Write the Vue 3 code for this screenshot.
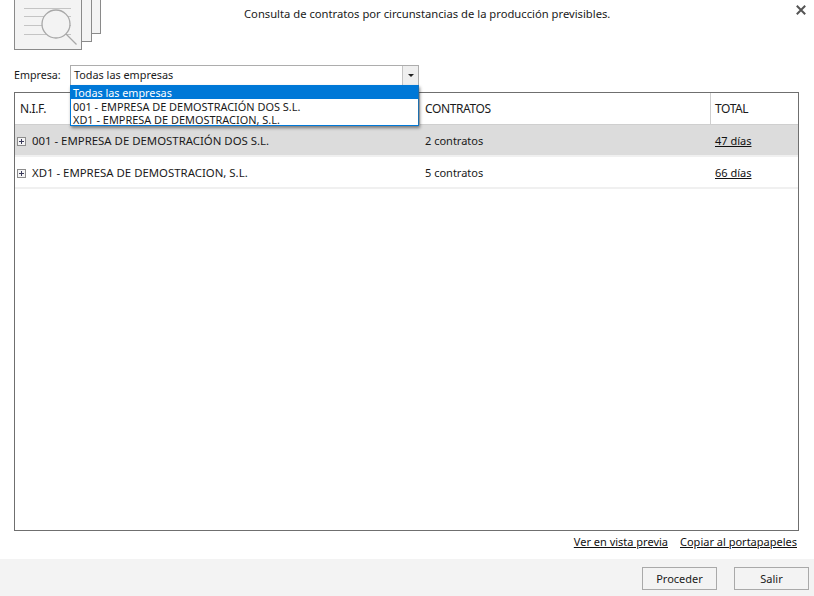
<script setup>
const rows = [
  { name: '001 - EMPRESA DE DEMOSTRACIÓN DOS S.L.', contracts: '2 contratos', total: '47 días', active: true },
  { name: 'XD1 - EMPRESA DE DEMOSTRACION, S.L.', contracts: '5 contratos', total: '66 días', active: false },
]
const options = ['Todas las empresas', '001 - EMPRESA DE DEMOSTRACIÓN DOS S.L.', 'XD1 - EMPRESA DE DEMOSTRACION, S.L.']
</script>

<template>
  <div class="page">
    <header class="head">
      <svg class="logo" width="90" height="50" viewBox="0 0 90 50">
        <rect x="0.5" y="-10" width="86" height="43.5" fill="#f3f3f3" stroke="#8a8a8a" />
        <rect x="0.5" y="-10" width="77" height="51.5" fill="#f3f3f3" stroke="#8a8a8a" />
        <rect x="0.5" y="-10" width="67" height="59.5" fill="#f3f3f3" stroke="#8a8a8a" />
        <path d="M10 8.5H57M10 16.5H57M10 25.5H57M10 34.5H57" stroke="#c4c4c4" fill="none" />
        <circle cx="42" cy="24" r="14" fill="#f3f3f3" stroke="#a8a8a8" stroke-width="1.3" />
        <path d="M52 34L62.5 44.5" stroke="#a8a8a8" stroke-width="1.3" />
      </svg>
      <p class="title">Consulta de contratos por circunstancias de la producción previsibles.</p>
      <svg class="close" width="10" height="10" viewBox="0 0 10 10">
        <path d="M0.8 0.8L9.2 9.2M9.2 0.8L0.8 9.2" stroke="#555" stroke-width="2" />
      </svg>
    </header>

    <div class="filter">
      <label class="filter-label">Empresa:</label>
      <div class="combo">
        <div class="combo-field">
          <span class="combo-value">Todas las empresas</span>
          <span class="combo-btn"><i class="caret"></i></span>
        </div>
        <ul class="menu">
          <li v-for="(o, i) in options" :key="o" :class="{ selected: i === 0 }">{{ o }}</li>
        </ul>
      </div>
    </div>

    <main class="grid">
      <div class="grid-row grid-head">
        <div class="cell col-name">N.I.F.</div>
        <div class="cell col-contracts">CONTRATOS</div>
        <div class="cell col-total">TOTAL</div>
      </div>
      <div v-for="r in rows" :key="r.name" class="grid-row body-row" :class="{ active: r.active }">
        <div class="cell col-name">
          <svg class="expander" width="9" height="9" viewBox="0 0 9 9">
            <rect x="0.5" y="0.5" width="8" height="8" fill="#f4f4f4" stroke="#8c8c8c" />
            <path d="M2 4.5H7M4.5 2V7" stroke="#3a3a5a" />
          </svg>
          {{ r.name }}
        </div>
        <div class="cell col-contracts">{{ r.contracts }}</div>
        <div class="cell col-total"><a class="link">{{ r.total }}</a></div>
      </div>
    </main>

    <nav class="links">
      <a class="link">Ver en vista previa</a>
      <a class="link">Copiar al portapapeles</a>
    </nav>

    <footer class="foot">
      <button class="btn">Proceder</button>
      <button class="btn">Salir</button>
    </footer>
  </div>
</template>

<style scoped>
.page {
  width: 814px;
  height: 596px;
  display: flex;
  flex-direction: column;
  background: #fff;
  color: #1a1a1a;
  font: 11px/16px "Noto Sans", "Open Sans", sans-serif;
  overflow: hidden;
}
.head {
  height: 50px;
  display: flex;
  padding-left: 14px;
  position: relative;
  flex: none;
}
.logo { flex: none; }
.title {
  margin: 6px 0 0 140px;
  white-space: nowrap;
  font-size: 11.23px;
}
.close { position: absolute; left: 796px; top: 5px; }
.filter {
  flex: none;
  display: flex;
  align-items: center;
  margin-top: 14px;
  padding-left: 14px;
  height: 22px;
}
.filter-label { width: 56px; flex: none; font-size: 10.7px; }
.combo { position: relative; width: 349px; height: 21px; }
.combo-field {
  height: 21px;
  box-sizing: border-box;
  border: 1px solid #adadad;
  display: flex;
  align-items: center;
  justify-content: space-between;
  padding-left: 3px;
  font-size: 10.85px;
}
.combo-btn {
  width: 15px;
  height: 19px;
  background: #efefef;
  border-left: 1px solid #c4c4c4;
  display: flex;
  align-items: center;
  justify-content: center;
}
.caret {
  border: 3px solid transparent;
  border-top: 3px solid #222;
  border-bottom: 0;
}
.menu {
  position: absolute;
  z-index: 2;
  top: 20px;
  left: 0;
  width: 349px;
  box-sizing: border-box;
  margin: 0;
  padding: 0;
  list-style: none;
  background: #fff;
  border: 1px solid #0078d7;
  border-right-color: #1c6fb0;
  box-shadow: 1px 2px 3px rgba(0, 0, 0, 0.45);
}
.menu li {
  height: 13px;
  box-sizing: border-box;
  padding: 1px 0 0 2px;
  line-height: 13px;
  white-space: nowrap;
  font-size: 10.93px;
}
.menu li.selected {
  padding-top: 0;
  background: #0078d7;
  color: #fff;
  font-size: 10.8px;
}
.grid {
  flex: none;
  box-sizing: border-box;
  height: 439px;
  margin: 6px 15px 0 14px;
  border: 1px solid #6f6f6f;
}
.grid-row { display: flex; }
.grid-head { height: 32px; box-sizing: border-box; border-bottom: 1px solid #cfcfcf; }
.body-row { height: 32px; box-sizing: border-box; border-bottom: 2px solid #f0f0f0; }
.body-row .cell { padding-top: 8px; }
.body-row.active { background: #dcdcdc; border-bottom-color: #f0f0f0; }
.cell {
  box-sizing: border-box;
  padding: 8px 0 0 5px;
  white-space: nowrap;
}
.grid-head .cell { font-size: 12px; letter-spacing: -0.4px; }
.grid-head .cell + .cell { border-left: 1px solid #cfcfcf; }
.col-name { width: 404px; }
.col-contracts { width: 291px; }
.col-total { flex: 1; }
.grid-head .col-total { padding-left: 4px; }
.body-row .col-name { padding-left: 2px; font-size: 11.4px; }
.body-row .col-contracts { padding-left: 6px; }
.body-row .col-total { padding-left: 5px; }
.expander { margin-right: 3px; vertical-align: -1px; }
.link { text-decoration: underline; color: #111; }
.links {
  flex: none;
  display: flex;
  justify-content: flex-end;
  gap: 12px;
  margin-top: 2px;
  padding-right: 17px;
  height: 26px;
  line-height: 18px;
}
.foot {
  flex: 1;
  background: #f3f3f3;
  display: flex;
  justify-content: flex-end;
  gap: 17px;
  padding: 8px 5px 0 0;
}
.btn {
  width: 75px;
  height: 23px;
  padding: 0;
  background: #f3f3f3;
  border: 1px solid #a9a9a9;
  font: inherit;
  color: #1a1a1a;
}
</style>
